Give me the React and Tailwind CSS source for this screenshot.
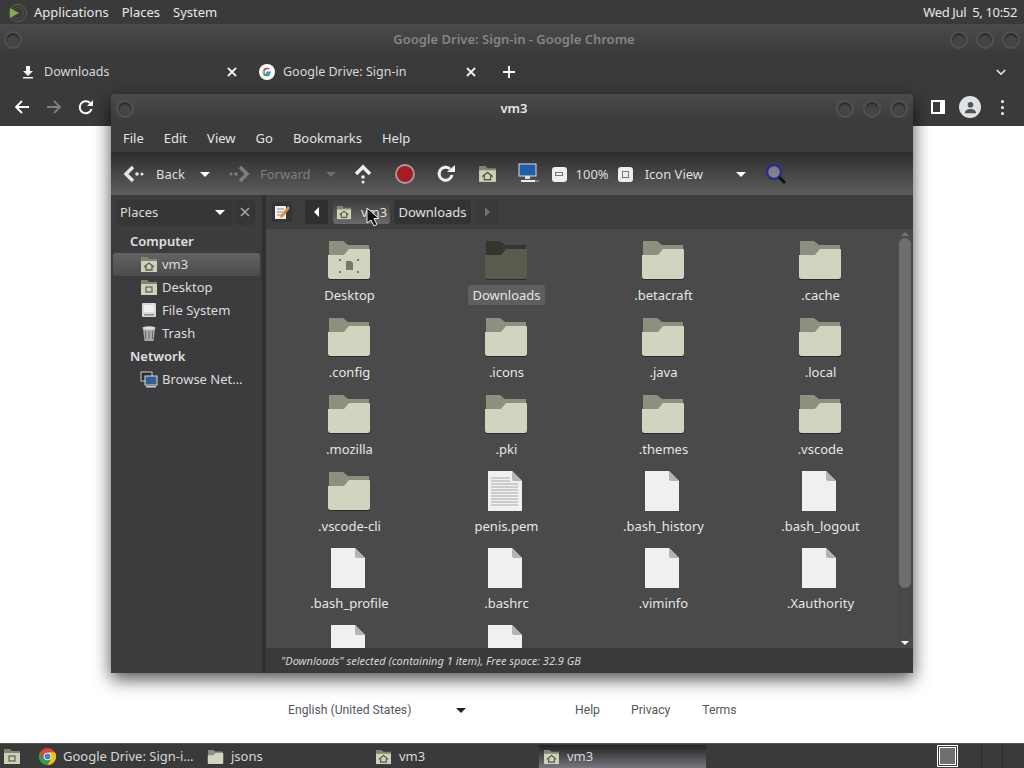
const Folder = ({ dark = false, className = 'w-[46px] h-[42px]', children }) => (
  <svg viewBox="0 0 46 42" className={className}>
    <path d="M3 2h14l5 4h21v12H3z" fill={dark ? '#35352f' : '#8f8f80'} />
    <path d="M2 16h16l5-6h20a1 1 0 0 1 1 1v27a2 2 0 0 1-2 2H4a2 2 0 0 1-2-2z" fill={dark ? '#5a5b4e' : '#d3d4c0'} />
    <path d="M2 38a2 2 0 0 0 2 2h38a2 2 0 0 0 2-2v1a2 2 0 0 1-2 2H4a2 2 0 0 1-2-2z" fill="#2c2c28" />
    {children}
  </svg>
);

const DesktopMark = () => (
  <g fill="#77776a">
    <path d="M20 22h5l2 2v7h-7z" />
    <rect x="13" y="20" width="2" height="2" />
    <rect x="31" y="20" width="2" height="2" />
    <rect x="13" y="32" width="2" height="2" />
    <rect x="31" y="32" width="2" height="2" />
  </g>
);

const HomeFolder = ({ className = 'w-[18px] h-[17px]' }) => (
  <svg viewBox="0 0 18 17" className={className}>
    <path d="M1 1h6l2 2h8v4H1z" fill="#85856f" />
    <path d="M1 5h16v11H1z" fill="#cfd0b8" />
    <path d="M4 11l5-4 5 4M6 10v4h6v-4" fill="none" stroke="#5c5c50" strokeWidth="1.3" />
  </svg>
);

const SmallDesktop = () => (
  <svg viewBox="0 0 18 17" className="w-[18px] h-[17px]">
    <path d="M1 1h6l2 2h8v4H1z" fill="#85856f" />
    <path d="M1 5h16v11H1z" fill="#cfd0b8" />
    <rect x="6" y="8" width="6" height="5" fill="none" stroke="#5c5c50" strokeWidth="1.2" />
  </svg>
);

const FileSystemIcon = () => (
  <svg viewBox="0 0 18 17" className="w-[18px] h-[17px]">
    <rect x="2" y="1" width="14" height="14" rx="1" fill="#d9d9d9" />
    <rect x="4" y="3" width="10" height="7" fill="#efefef" />
    <rect x="4" y="12" width="10" height="1.5" fill="#8a8a8a" />
  </svg>
);

const TrashIcon = () => (
  <svg viewBox="0 0 18 17" className="w-[18px] h-[17px]">
    <path d="M3 4h12l-1.500 12h-9z" fill="#a9a9a9" />
    <path d="M5.500 6v8M9 6v8M12.500 6v8" stroke="#6a6a6a" strokeWidth="1" />
    <ellipse cx="9" cy="3" rx="6.500" ry="1.800" fill="#dedede" />
  </svg>
);

const NetworkIcon = () => (
  <svg viewBox="0 0 18 17" className="w-[18px] h-[17px]">
    <rect x="1" y="1" width="11" height="9" fill="#2b2f33" stroke="#c9c9c9" />
    <rect x="5" y="5" width="12" height="9" fill="#2f5f94" stroke="#d9d9d9" />
    <rect x="6" y="15" width="10" height="1.500" fill="#c9c9c9" />
  </svg>
);

const PageIcon = ({ text = false }) => (
  <svg viewBox="0 0 36 42" className="w-[36px] h-[42px] -ml-[2px]">
    <path d="M1 1h24l10 10v30H1z" fill="#f0f1ee" />
    <path d="M25 1l10 10h-8a2 2 0 0 1-2-2z" fill="#b4b5b2" />
    {text && (
      <g stroke="#a9aaa8" strokeWidth="1">
        {[8, 11, 14, 17, 20, 23, 26, 29, 32, 35].map((y) => (
          <path key={y} d={`M4 ${y}h${y < 12 ? 19 : 27}`} />
        ))}
      </g>
    )}
  </svg>
);

const WinButton = ({ size = 'w-[18px] h-[18px]' }) => (
  <span className={`${size} rounded-full bg-[#454545] border-2 border-[#525252] shadow-[inset_0_2px_2px_rgba(0,0,0,0.45)]`} />
);

const Caret = ({ color = 'border-t-white', className = '' }) => (
  <span className={`w-0 h-0 border-x-[5px] border-x-transparent border-t-[5px] ${color} ${className}`} />
);

const BackIcon = ({ flip = false, color = '#e6e6e6' }) => (
  <svg viewBox="0 0 22 20" className="w-[22px] h-[20px]" style={flip ? { transform: 'scaleX(-1)' } : undefined}>
    <path d="M10 3l-7 7 7 7" fill="none" stroke={color} strokeWidth="3.500" />
    <circle cx="14" cy="10" r="1.800" fill={color} />
    <circle cx="19" cy="10" r="1.500" fill={color} />
  </svg>
);

const ChromeIcon = () => (
  <svg viewBox="0 0 16 16" className="w-[17px] h-[17px]">
    <circle cx="8" cy="8" r="8" fill="#db4437" />
    <path d="M8 16a8 8 0 0 1-7-12l4 7h6z" fill="#2f9e49" />
    <path d="M8 16a8 8 0 0 0 7-12H8l3 7z" fill="#f4c20d" />
    <circle cx="8" cy="8" r="3.600" fill="#fff" />
    <circle cx="8" cy="8" r="2.800" fill="#3f7fe8" />
  </svg>
);

const GoogleIcon = () => (
  <span className="w-4 h-4 rounded-full bg-white flex items-center justify-center">
    <svg viewBox="0 0 16 16" className="w-3 h-3">
      <path d="M13 8.200H8v2h3c-.4 1.300-1.500 2-3 2a4.200 4.200 0 0 1 0-8.400" fill="none" stroke="#4285f4" strokeWidth="2" />
      <path d="M3.600 5.500A5 5 0 0 1 11 4.300" fill="none" stroke="#ea4335" strokeWidth="2" />
      <path d="M3 10a5 5 0 0 1 0-4" fill="none" stroke="#fbbc05" strokeWidth="2" />
      <path d="M3.400 10.500a5 5 0 0 0 7.600 1" fill="none" stroke="#34a853" strokeWidth="2" />
    </svg>
  </span>
);

const files = [
  { name: 'Desktop', type: 'desktop' },
  { name: 'Downloads', type: 'selected' },
  { name: '.betacraft', type: 'folder' },
  { name: '.cache', type: 'folder' },
  { name: '.config', type: 'folder' },
  { name: '.icons', type: 'folder' },
  { name: '.java', type: 'folder' },
  { name: '.local', type: 'folder' },
  { name: '.mozilla', type: 'folder' },
  { name: '.pki', type: 'folder' },
  { name: '.themes', type: 'folder' },
  { name: '.vscode', type: 'folder' },
  { name: '.vscode-cli', type: 'folder' },
  { name: 'penis.pem', type: 'text' },
  { name: '.bash_history', type: 'file' },
  { name: '.bash_logout', type: 'file' },
  { name: '.bash_profile', type: 'file' },
  { name: '.bashrc', type: 'file' },
  { name: '.viminfo', type: 'file' },
  { name: '.Xauthority', type: 'file' },
  { name: '', type: 'file' },
  { name: '', type: 'file' },
];

const FileItem = ({ item }) => (
  <div className="h-[77px] flex flex-col items-center">
    <div className="h-[44px] flex items-end justify-center">
      {item.type === 'desktop' && <Folder><DesktopMark /></Folder>}
      {item.type === 'selected' && <Folder dark />}
      {item.type === 'folder' && <Folder />}
      {item.type === 'text' && <PageIcon text />}
      {item.type === 'file' && <PageIcon />}
    </div>
    {item.name && (
      <span className={`mt-[4px] ml-[2px] px-[4px] h-[20px] leading-[20px] rounded-[3px] text-[13px] text-[#e6e6e6] ${item.type === 'selected' ? 'bg-[#5f5f5f]' : ''}`}>
        {item.name}
      </span>
    )}
  </div>
);

const SideRow = ({ icon, label, active = false }) => (
  <div className={`h-[23px] mx-[2px] pl-[27px] flex items-center gap-[4px] text-[13px] text-[#dcdcdc] ${active ? 'rounded-[3px] bg-gradient-to-b from-[#636363] to-[#4c4c4c]' : ''}`}>
    {icon}
    <span>{label}</span>
  </div>
);

const FileManager = () => (
  <div className="absolute left-[111px] top-[94px] w-[802px] h-[579px] flex flex-col bg-[#3c3c3e] rounded-t-[4px] shadow-[0_6px_18px_rgba(0,0,0,0.7)] font-['Noto_Sans',sans-serif]">
    <div className="h-[30px] shrink-0 px-[5px] flex items-center bg-gradient-to-b from-[#4b4b4b] to-[#3a3a3a] rounded-t-[4px]">
      <div className="w-[72px] flex">
        <WinButton />
      </div>
      <span className="flex-1 pl-[4px] text-center text-[13px] font-semibold text-[#e8e8e8]">vm3</span>
      <div className="flex gap-[9px]">
        <WinButton />
        <WinButton />
        <WinButton />
      </div>
    </div>
    <div className="h-[28px] shrink-0 pl-[12px] pt-[1px] flex items-center gap-[20px] text-[13px] text-[#e4e4e4] bg-[#3c3c3c]">
      <span>File</span>
      <span>Edit</span>
      <span>View</span>
      <span>Go</span>
      <span>Bookmarks</span>
      <span>Help</span>
    </div>
    <div className="h-[43px] shrink-0 pl-[12px] pt-[1px] flex items-center text-[13px] text-[#dedede] bg-gradient-to-b from-[#2e2e2e] to-[#5e5e5e]">
      <BackIcon />
      <span className="ml-[11px] translate-y-[1px]">Back</span>
      <Caret className="ml-[15px]" />
      <span className="ml-[18px]"><BackIcon flip color="#7e7e7e" /></span>
      <span className="ml-[10px] text-[#7f7f7f] translate-y-[1px]">Forward</span>
      <Caret color="border-t-[#6f6f6f]" className="ml-[15px]" />
      <svg viewBox="0 0 20 20" className="ml-[17px] w-[20px] h-[20px]">
        <path d="M3 10l7-7 7 7" fill="none" stroke="#eee" strokeWidth="3.500" />
        <circle cx="10" cy="13" r="1.800" fill="#eee" />
        <circle cx="10" cy="18" r="1.500" fill="#eee" />
      </svg>
      <svg viewBox="0 0 20 20" className="ml-[22px] w-[20px] h-[20px]">
        <circle cx="10" cy="10" r="9" fill="#a51d24" stroke="#b09a98" strokeWidth="1.800" />
      </svg>
      <svg viewBox="0 0 20 20" className="ml-[21px] w-[20px] h-[20px]">
        <path d="M16 11a6.500 6.500 0 1 1-2-6" fill="none" stroke="#f0f0f0" strokeWidth="3" />
        <path d="M11 8h8V1z" fill="#f0f0f0" />
      </svg>
      <span className="ml-[22px]"><HomeFolder className="w-[19px] h-[18px]" /></span>
      <svg viewBox="0 0 22 22" className="ml-[20px] w-[22px] h-[22px]">
        <rect x="2" y="1" width="17" height="12" fill="#1f5da8" stroke="#ddd" />
        <path d="M8 13h5v3H8z" fill="#ddd" />
        <path d="M4 17h14v2H4z" fill="#eee" />
        <path d="M18 18h4" stroke="#aaa" />
      </svg>
      <span className="ml-[13px] w-[15px] h-[15px] rounded-[3px] bg-[#eeeeee] flex items-center justify-center">
        <span className="w-[8px] h-[4px] border border-[#777]" />
      </span>
      <span className="ml-[9px] translate-y-[1px]">100%</span>
      <span className="ml-[9px] w-[15px] h-[15px] rounded-[3px] bg-[#eeeeee] flex items-center justify-center">
        <span className="w-[7px] h-[7px] border border-[#777]" />
      </span>
      <span className="ml-[12px] w-[91px] translate-y-[1px]">Icon View</span>
      <Caret />
      <svg viewBox="0 0 22 22" className="ml-[19px] w-[22px] h-[22px]">
        <circle cx="9" cy="9" r="7" fill="#c9cfe0" fillOpacity="0.45" stroke="#2a2f8c" strokeWidth="2.500" />
        <path d="M14 14l6 6" stroke="#111" strokeWidth="3" />
      </svg>
    </div>
    <div className="flex-1 min-h-0 flex">
      <div className="w-[151px] shrink-0 flex flex-col">
        <div className="h-[34px] shrink-0 pl-[5px] flex items-center gap-[1px] text-[13px] text-[#dcdcdc]">
          <div className="w-[117px] h-[25px] pl-[4px] pr-[8px] pt-[1px] flex items-center justify-between rounded-[3px] bg-[#363636]">
            <span>Places</span>
            <Caret />
          </div>
          <div className="w-[21px] h-[25px] flex items-center justify-center rounded-[3px] bg-[#363636]">
            <svg viewBox="0 0 10 10" className="w-[10px] h-[10px]">
              <path d="M1 1l8 8M9 1l-8 8" stroke="#a8a8a8" strokeWidth="1.500" />
            </svg>
          </div>
        </div>
        <div className="h-[23px] mt-[1px] pl-[19px] flex items-center text-[13px] font-semibold text-[#e0e0e0]">Computer</div>
        <SideRow active icon={<HomeFolder />} label="vm3" />
        <SideRow icon={<SmallDesktop />} label="Desktop" />
        <SideRow icon={<FileSystemIcon />} label="File System" />
        <SideRow icon={<TrashIcon />} label="Trash" />
        <div className="h-[23px] pl-[19px] flex items-center text-[13px] font-semibold text-[#e0e0e0]">Network</div>
        <SideRow icon={<NetworkIcon />} label="Browse Net…" />
      </div>
      <div className="w-[4px] shrink-0 bg-[#303030]" />
      <div className="flex-1 min-w-0 flex flex-col">
        <div className="h-[34px] shrink-0 pl-[6px] flex items-center text-[13px] text-[#e0e0e0] bg-[#3e3e3e]">
          <span className="w-[20px] h-[20px] flex items-center justify-center rounded-[2px] bg-[#343434]">
            <svg viewBox="0 0 16 16" className="w-[16px] h-[16px]">
              <rect x="1" y="2" width="11" height="13" fill="#f2f2f2" />
              <path d="M3 5h7M3 8h6M3 11h5" stroke="#8a8a8a" />
              <path d="M14 2l-7 9-1 3 3-1 7-9z" fill="#e08a2a" />
            </svg>
          </span>
          <span className="ml-[13px] w-[23px] h-[24px] flex items-center justify-center rounded-[3px] bg-[#2f2f2f]">
            <span className="w-0 h-0 border-y-[5px] border-y-transparent border-r-[5px] border-r-white" />
          </span>
          <span className="ml-[5px] w-[57px] h-[24px] pl-[3px] pt-[1px] flex items-center gap-[9px] rounded-[3px] bg-gradient-to-b from-[#3d3d3d] to-[#6a6a6a]">
            <HomeFolder className="w-[16px] h-[15px]" />
            <span>vm3</span>
          </span>
          <span className="ml-[4px] w-[77px] h-[24px] pt-[1px] flex items-center justify-center rounded-[3px] bg-[#333333]">Downloads</span>
          <span className="ml-[5px] w-[22px] h-[24px] flex items-center justify-center rounded-[3px] bg-[#3a3a3a]">
            <span className="w-0 h-0 border-y-[5px] border-y-transparent border-l-[5px] border-l-[#6f6f6f]" />
          </span>
        </div>
        <div className="flex-1 min-h-0 flex bg-[#4a4a4a]">
          <div className="flex-1 min-w-0 overflow-hidden pt-[8px] pl-[4px]">
            <div className="grid grid-cols-[repeat(4,157px)]">
              {files.map((item, i) => (
                <FileItem key={i} item={item} />
              ))}
            </div>
          </div>
          <div className="w-[15px] shrink-0 py-[3px] pr-[2px] flex flex-col items-center">
            <span className="w-0 h-0 border-x-[4px] border-x-transparent border-b-[4px] border-b-[#777]" />
            <div className="flex-1 w-[12px] mt-[2px] mb-[2px] rounded-[6px] border border-[#424242]">
              <div className="-m-[1px] w-[12px] h-[350px] rounded-[6px] bg-[#6e6e6e]" />
            </div>
            <span className="w-0 h-0 border-x-[4px] border-x-transparent border-t-[4px] border-t-white" />
          </div>
        </div>
        <div className="h-[25px] shrink-0 pl-[15px] pt-[1px] flex items-center text-[11px] italic text-[#d6d6d6] bg-[#3a3a3a]">
          "Downloads" selected (containing 1 item), Free space: 32.9 GB
        </div>
      </div>
    </div>
  </div>
);

const Task = ({ icon, label, active = false }) => (
  <div className={`h-[23px] flex items-center ${active ? 'pl-[4px] gap-[7px] bg-gradient-to-b from-[#242424] to-[#77777f]' : 'pl-[5px] gap-[7px]'}`}>
    {icon}
    <span>{label}</span>
  </div>
);

export default function App() {
  return (
    <div className="relative w-[1024px] h-[768px] overflow-hidden flex flex-col bg-white font-['Noto_Sans',sans-serif]">
      {/* top panel */}
      <div className="h-[24px] shrink-0 pt-[1px] pl-[8px] pr-[7px] flex items-center text-[13px] text-[#e8e8e8] bg-[#3a3a3a]">
        <svg viewBox="0 0 20 20" className="w-[20px] h-[20px]">
          <circle cx="10" cy="10" r="8.500" fill="none" stroke="#5d6650" strokeWidth="1" />
          <circle cx="10" cy="10" r="5.500" fill="none" stroke="#4e5646" strokeWidth="1" />
          <path d="M2 5l9 5-9 5z" fill="#8aa84e" />
        </svg>
        <span className="ml-[6px]">Applications</span>
        <span className="ml-[13px]">Places</span>
        <span className="ml-[13px]">System</span>
        <span className="ml-auto tracking-[-0.35px]">Wed Jul &nbsp;5, 10:52</span>
      </div>

      {/* chrome title */}
      <div className="h-[31px] shrink-0 px-[4px] flex items-center bg-gradient-to-b from-[#4a4a4a] to-[#3a3a3a]">
        <div className="w-[70px] flex">
          <WinButton />
        </div>
        <span className="flex-1 pl-[4px] text-center text-[13px] font-semibold text-[#858585]">Google Drive: Sign-in - Google Chrome</span>
        <div className="flex gap-[8px]">
          <WinButton />
          <WinButton />
          <WinButton />
        </div>
      </div>

      {/* chrome tabs */}
      <div className="h-[33px] shrink-0 pt-[1px] flex items-center text-[12.500px] text-[#d8d8d8] bg-[#3a3a3a]">
        <div className="w-[245px] pl-[22px] pr-[8px] flex items-center">
          <svg viewBox="0 0 12 14" className="w-[12px] h-[14px]">
            <path d="M4 1h4v5h3L6 11 1 6h3zM1 12h10v1.500H1z" fill="#f0f0f0" />
          </svg>
          <span className="ml-[10px]">Downloads</span>
          <svg viewBox="0 0 10 10" className="ml-auto w-[10px] h-[10px]">
            <path d="M1 1l8 8M9 1l-8 8" stroke="#f2f2f2" strokeWidth="1.800" />
          </svg>
        </div>
        <div className="w-[239px] pl-[14px] pr-[8px] flex items-center">
          <GoogleIcon />
          <span className="ml-[8px]">Google Drive: Sign-in</span>
          <svg viewBox="0 0 10 10" className="ml-auto w-[10px] h-[10px]">
            <path d="M1 1l8 8M9 1l-8 8" stroke="#f2f2f2" strokeWidth="1.800" />
          </svg>
        </div>
        <svg viewBox="0 0 12 12" className="ml-[19px] w-[12px] h-[12px]">
          <path d="M6 0v12M0 6h12" stroke="#fff" strokeWidth="1.800" />
        </svg>
        <svg viewBox="0 0 12 8" className="ml-auto mr-[18px] w-[10px] h-[7px]">
          <path d="M1 1l5 5 5-5" fill="none" stroke="#f0f0f0" strokeWidth="1.800" />
        </svg>
      </div>

      {/* chrome toolbar */}
      <div className="h-[38px] shrink-0 pl-[14px] pr-[20px] flex items-center bg-[#3a3a3a]">
        <svg viewBox="0 0 16 16" className="w-[16px] h-[16px]">
          <path d="M15 8H2M8 2L2 8l6 6" fill="none" stroke="#fff" strokeWidth="1.800" />
        </svg>
        <svg viewBox="0 0 16 16" className="ml-[16px] w-[16px] h-[16px]">
          <path d="M1 8h13M8 2l6 6-6 6" fill="none" stroke="#7f7f7f" strokeWidth="1.800" />
        </svg>
        <svg viewBox="0 0 16 16" className="ml-[16px] w-[16px] h-[16px]">
          <path d="M13.500 10A6 6 0 1 1 12 4" fill="none" stroke="#fff" strokeWidth="2" />
          <path d="M9 7h6V1z" fill="#fff" />
        </svg>
        <span className="ml-auto w-[14px] h-[14px] border-2 border-white border-r-[5px] bg-[#3a3a3a]" />
        <span className="ml-[14px] w-[22px] h-[22px] rounded-full bg-[#dfe1e5] flex items-center justify-center">
          <svg viewBox="0 0 16 16" className="w-[15px] h-[15px]">
            <circle cx="8" cy="5" r="3" fill="#4f5358" />
            <path d="M2 14c0-3 3-4.500 6-4.500s6 1.500 6 4.500z" fill="#4f5358" />
          </svg>
        </span>
        <span className="ml-[20px] w-[3px] flex flex-col gap-[3px]">
          <span className="w-[3px] h-[3px] rounded-full bg-white" />
          <span className="w-[3px] h-[3px] rounded-full bg-white" />
          <span className="w-[3px] h-[3px] rounded-full bg-white" />
        </span>
      </div>

      {/* page under the windows */}
      <div className="flex-1 min-h-0 flex items-end pb-[24px] pl-[288px] bg-white text-[12.200px] text-[#55585c] font-['Roboto',sans-serif]">
        <span className="w-[168px]">English (United States)</span>
        <Caret color="border-t-[#222222]" className="mb-[6px]" />
        <span className="ml-[109px]">Help</span>
        <span className="ml-[31px]">Privacy</span>
        <span className="ml-[32px]">Terms</span>
      </div>

      {/* taskbar */}
      <div className="h-[25px] shrink-0 pl-[3px] flex items-end text-[13px] text-[#d8d8d8] bg-[#3a3a3a] border-t border-[#555555]">
        <div className="w-[31px] h-[23px] flex items-center">
          <SmallDesktop />
        </div>
        <div className="w-[168px]"><Task icon={<ChromeIcon />} label="Google Drive: Sign-i…" /></div>
        <div className="w-[168px]"><Task icon={<Folder className="w-[17px] h-[16px]" />} label="jsons" /></div>
        <div className="w-[169px]"><Task icon={<HomeFolder className="w-[17px] h-[16px]" />} label="vm3" /></div>
        <div className="w-[167px]"><Task active icon={<HomeFolder className="w-[17px] h-[16px]" />} label="vm3" /></div>
        <span className="ml-[231px] mb-[1px] w-[21px] h-[22px] border border-white p-[1px]">
          <span className="block w-full h-full border border-white bg-[#6f6f6f]" />
        </span>
        <div className="ml-[23px] w-[21px] h-[24px] border-l border-[#2d2d2d]" />
        <div className="w-[22px] h-[24px] border-l border-[#2d2d2d]" />
      </div>

      <FileManager />

      {/* mouse pointer */}
      <svg viewBox="0 0 14 20" className="absolute left-[366px] top-[207px] w-[14px] h-[20px]">
        <path d="M1 1v15l4-3 3 6 3-1.500-3-6h5z" fill="#111" stroke="#eee" strokeWidth="1" />
      </svg>
    </div>
  );
}
